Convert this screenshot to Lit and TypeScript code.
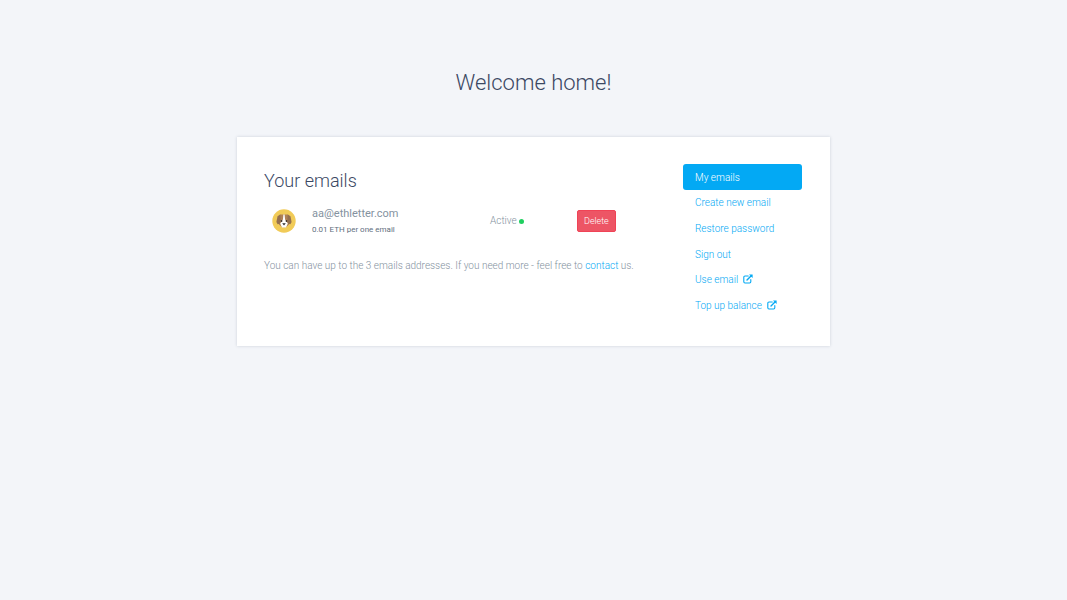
import { LitElement, html, css } from "lit";
import { customElement } from "lit/decorators.js";

interface NavItem {
  label: string;
  active?: boolean;
  external?: boolean;
}

const NAV_ITEMS: NavItem[] = [
  { label: "My emails", active: true },
  { label: "Create new email" },
  { label: "Restore password" },
  { label: "Sign out" },
  { label: "Use email", external: true },
  { label: "Top up balance", external: true },
];

const externalIcon = html`<svg class="external" viewBox="0 0 20 20" aria-hidden="true">
  <path d="M10.5 4H4a2.4 2.4 0 0 0-2.4 2.4v9.2A2.4 2.4 0 0 0 4 18h9.2a2.4 2.4 0 0 0 2.4-2.4V11" fill="none" stroke="currentColor" stroke-width="2.2" stroke-linecap="round" />
  <path d="M8 12.2 16.5 3.7" fill="none" stroke="currentColor" stroke-width="2.8" stroke-linecap="round" />
  <path d="M12 .8h7.2V8z" fill="currentColor" />
</svg>`;

const dogAvatar = html`<svg class="avatar" viewBox="0 0 24 24" role="img" aria-label="Avatar">
  <circle cx="12" cy="12" r="11.7" fill="#f1cb58" />
  <path d="M8 5.500h8l2 5-1 5-3 2.800h-4L7 15.500l-1-5z" fill="#b08258" />
  <path d="M11.400 5.500h1.200l.5 5 2.700 4-1.800 4h-4l-1.800-4 2.700-4z" fill="#fff" />
  <path d="M8.200 5.500 5.500 7.200 4.400 13l1.200 2.200 2.200-.5L8.600 10z" fill="#94704f" />
  <path d="m15.800 5.500 2.700 1.700 1.100 5.800-1.200 2.200-2.200-.5-.8-4.700z" fill="#94704f" />
  <circle cx="9.500" cy="12" r=".9" fill="#3c302c" />
  <circle cx="14.500" cy="12" r=".9" fill="#3c302c" />
  <path d="M10.200 14.200h3.600L12 16.500z" fill="#29272b" />
</svg>`;

@customElement("app-root")
export class AppRoot extends LitElement {
  static styles = css`
    :host {
      display: block;
      min-height: 100vh;
      box-sizing: border-box;
      padding: 64px 24px;
      background: #f3f5f9;
      color: #8492a0;
      font: 300 10px/18px Roboto, sans-serif;
    }
    *, *::before {
      box-sizing: border-box;
    }
    h1, h2, p, ul {
      margin: 0;
      padding: 0;
      font-weight: 300;
    }
    h1 {
      text-align: center;
      font-size: 22px;
      line-height: 37px;
      color: #3b4863;
    }
    h2 {
      font-size: 18px;
      line-height: 28px;
      color: #3b4863;
    }
    a {
      color: #03a9f4;
      text-decoration: none;
    }
    .card {
      display: flex;
      gap: 28px;
      max-width: 593px;
      margin: 36px auto 0;
      padding: 27px 28px 28px 27px;
      background: #fff;
      box-shadow: 0 0 3px rgba(60, 70, 100, 0.2);
    }
    .main {
      flex: 1;
      padding-top: 3px;
    }
    .row {
      display: flex;
      align-items: center;
      margin: 8px 0 19px;
      padding-left: 8px;
    }
    .avatar {
      width: 24px;
      height: 24px;
      margin-right: 16px;
    }
    .info {
      width: 178px;
      padding-top: 3px;
      line-height: 16px;
    }
    .address {
      font-size: 11px;
      font-weight: 400;
    }
    .price {
      font-size: 8px;
      font-weight: 400;
      color: #5f6f80;
    }
    .status {
      width: 87px;
    }
    .dot {
      display: inline-block;
      width: 5px;
      height: 5px;
      border-radius: 50%;
      background: #1fcf5f;
    }
    .delete {
      height: 22px;
      padding: 0 6px;
      border: 1px solid #f04356;
      border-radius: 2px;
      background: #ed5565;
      color: #fff;
      font: 300 9px/20px Roboto, sans-serif;
    }
    nav {
      width: 119px;
    }
    ul {
      display: grid;
      grid-auto-rows: 1fr;
      height: 154px;
      list-style: none;
    }
    .link {
      display: flex;
      align-items: center;
      gap: 5px;
      height: 100%;
      padding: 2px 12px 0;
      border-radius: 3px;
    }
    .active {
      background: #03a9f4;
      color: #fff;
    }
    .external {
      width: 10px;
      height: 10px;
      margin-bottom: 2px;
    }
  `;

  render() {
    return html`
      <h1>Welcome home!</h1>
      <main class="card">
        <section class="main">
          <h2>Your emails</h2>
          <div class="row">
            ${dogAvatar}
            <div class="info">
              <div class="address">aa@ethletter.com</div>
              <div class="price">0.01 ETH per one email</div>
            </div>
            <div class="status">Active <span class="dot"></span></div>
            <button class="delete" type="button">Delete</button>
          </div>
          <p>
            You can have up to the 3 emails addresses. If you need more - feel
            free to <a href="#">contact</a> us.
          </p>
        </section>
        <nav>
          <ul>
            ${NAV_ITEMS.map(
              (item) => html`<li>
                <a href="#" class="link ${item.active ? "active" : ""}"
                  >${item.label}${item.external ? externalIcon : ""}</a
                >
              </li>`
            )}
          </ul>
        </nav>
      </main>
    `;
  }
}
